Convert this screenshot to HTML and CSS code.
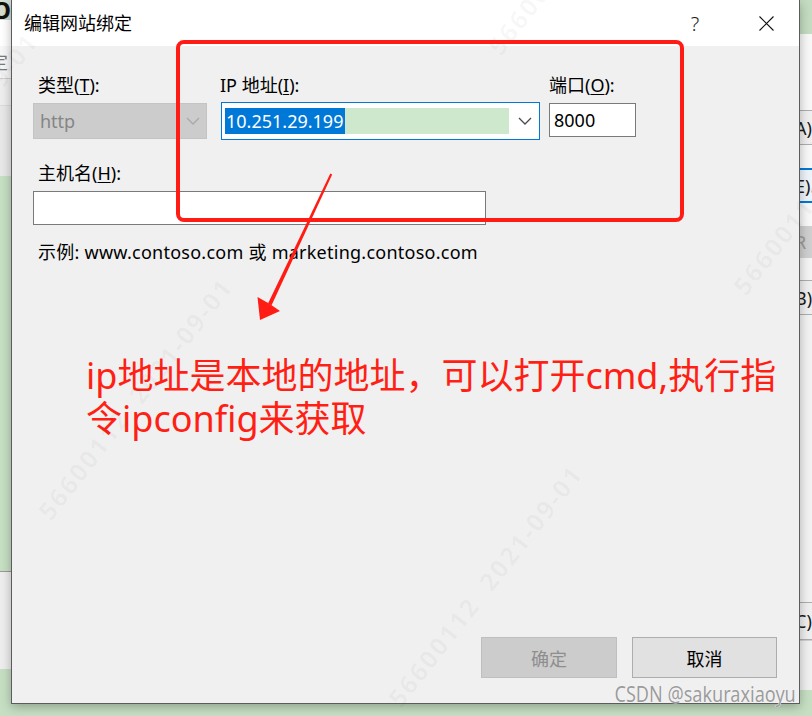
FILE: index.html
```html
<!DOCTYPE html>
<html lang="zh-CN">
<head>
<meta charset="utf-8">
<title>编辑网站绑定</title>
<link rel="stylesheet" href="styles.css">
</head>
<body>
<div class="screen">
  <div class="strip strip-left">
    <div class="band lb1"><span class="frag frag-o">O</span></div>
    <div class="band lb2"></div>
    <div class="band lb3"><span class="frag frag-ding">定</span></div>
    <div class="band lb4"></div>
    <div class="band lb5"></div>
    <div class="band lb6"></div>
    <div class="band lb7"></div>
    <div class="band lb8"></div>
  </div>

  <div class="dialog">
    <div class="titlebar">
      <span class="title">编辑网站绑定</span>
      <span class="tb-btn tb-help">?</span>
      <span class="tb-btn tb-close">
        <svg width="15" height="15" viewBox="0 0 15 15"><path d="M0.5 0.5 L14.5 14.5 M14.5 0.5 L0.5 14.5" stroke="#111" stroke-width="1.1" fill="none"/></svg>
      </span>
    </div>

    <div class="body">
      <div class="row1">
        <div class="col col-type">
          <div class="lbl lbl-indent">类型(<u>T</u>):</div>
          <div class="combo combo-disabled">
            <span class="combo-text">http</span>
            <svg class="chev" width="14" height="8" viewBox="0 0 14 8"><polyline points="1,1 7,7 13,1" fill="none" stroke="#a9a9a9" stroke-width="1.3"/></svg>
          </div>
        </div>
        <div class="col col-ip">
          <div class="lbl lbl-ip">IP 地址(<u>I</u>):</div>
          <div class="combo combo-ip">
            <div class="ip-edit"><span class="ip-sel">10.251.29.199</span></div>
            <svg class="chev" width="14" height="8" viewBox="0 0 14 8"><polyline points="1,1 7,7 13,1" fill="none" stroke="#4a4a4a" stroke-width="1.3"/></svg>
          </div>
        </div>
        <div class="col col-port">
          <div class="lbl">端口(<u>O</u>):</div>
          <div class="textbox port">8000</div>
        </div>
      </div>

      <div class="lbl lbl-indent row2-lbl">主机名(<u>H</u>):</div>
      <div class="textbox host"></div>
      <div class="example">示例: www.contoso.com 或 marketing.contoso.com</div>

      <div class="note">
        <span class="note-line">ip地址是本地的地址，可以打开cmd,执行指</span>
        <span class="note-line">令ipconfig来获取</span>
      </div>

      <div class="buttons">
        <div class="btn btn-disabled">确定</div>
        <div class="btn btn-cancel">取消</div>
      </div>
    </div>
  </div>

  <div class="strip strip-right">
    <div class="band rb1"></div>
    <div class="band rb2"></div>
    <div class="band rb3 rbox"><span class="frag frag-r">A).</span></div>
    <div class="band rb4"></div>
    <div class="band rb5 rbox rbox-focus"><span class="frag frag-r">E).</span></div>
    <div class="band rb6"></div>
    <div class="band rb7"><span class="frag frag-r frag-dis">R</span></div>
    <div class="band rb8"></div>
    <div class="band rb9 rbox"><span class="frag frag-r">B)</span></div>
    <div class="band rb10"></div>
    <div class="band rb11 rbox"><span class="frag frag-r">C)</span></div>
    <div class="band rb12"></div>
    <div class="band rb13"></div>
  </div>

  <div class="overlay">
    <span class="wm wm1">56600112&nbsp;&nbsp;2021-09-01</span>
    <span class="wm wm2">56600112&nbsp;&nbsp;2021-09-01</span>
    <span class="wm wm3">56600112&nbsp;&nbsp;2021-09-01</span>
    <span class="wm wm4">56600112&nbsp;&nbsp;2021-09-01</span>
    <span class="wm wm5">56600112&nbsp;&nbsp;2021-09-01</span>
    <svg class="marks" width="812" height="716" viewBox="0 0 812 716">
      <rect x="178" y="42" width="504" height="178" rx="6" ry="6" fill="none" stroke="#ff1c14" stroke-width="4"/>
      <polygon points="330.3,173.6 332.2,174.4 271.6,305.2 268.0,303.6" fill="#ff1c14"/>
      <polygon points="260,320 257.5,297 269,303.5 280,311" fill="#ff1c14"/>
    </svg>
    <span class="csdn">CSDN @sakuraxiaoyu</span>
  </div>
</div>
</body>
</html>
```

FILE: styles.css
```css
* { box-sizing: border-box; }

html, body {
  margin: 0;
  padding: 0;
}

body {
  width: 812px;
  height: 716px;
  overflow: hidden;
  background: #c6dfc3;
  font-family: "Noto Sans", "Noto Sans CJK SC", sans-serif;
  color: #000;
}

.screen {
  position: relative;
  width: 812px;
  height: 716px;
  display: grid;
  grid-template-columns: 11px 789px 12px;
  align-items: start;
}

/* ---------- background window fragments ---------- */
.strip {
  display: flex;
  flex-direction: column;
  height: 716px;
  overflow: hidden;
}

.band {
  flex: none;
  position: relative;
  overflow: hidden;
  display: flex;
  align-items: center;
}

.frag {
  white-space: nowrap;
  font-size: 18px;
  line-height: 20px;
}

.frag-o {
  font-size: 24px;
  font-weight: 700;
  margin-left: -8px;
  color: #111;
}

.frag-ding {
  margin-left: -10px;
  color: #7a7a7a;
}

.lb1 { height: 20px; background: #d3ddd0; }
.lb2 { height: 26px; background: #ffffff; }
.lb3 { height: 32px; background: #f7f7f7; }
.lb4 { height: 27px; background: #eeeeee; border-top: 1px solid #d2d2d2; }
.lb5 { height: 71px; background: #e8e8e8; border-top: 1px solid #dcdcdc; }
.lb6 { height: 395px; background: #c6e0c3; }
.lb7 { height: 98px; background: #eeeeee; border-top: 1px solid #9a9a9a; }
.lb8 { height: 47px; background: #c6dfc3; }

.rb1 { height: 34px; background: #c4dcc1; }
.rb2 { height: 76px; background: #f8f8f8; }
.rb3 { height: 35px; }
.rb4 { height: 23px; background: #f8f8f8; }
.rb5 { height: 35px; }
.rb6 { height: 23px; background: #f8f8f8; }
.rb7 { height: 32px; background: #cfcfcf; }
.rb8 { height: 22px; background: #f4f4f4; }
.rb9 { height: 35px; }
.rb10 { height: 287px; background: #f2f2f2; }
.rb11 { height: 38px; }
.rb12 { height: 50px; background: #f0f0f0; border-top: 1px solid #cfcfcf; }
.rb13 { height: 26px; background: #c6dfc3; }

.rbox {
  background: #efefef;
  border-top: 1px solid #adadad;
  border-bottom: 1px solid #adadad;
}

.rbox-focus {
  border-top: 2px solid #0078d7;
  border-bottom: 2px solid #0078d7;
  background: #eef4fa;
}

.frag-r {
  margin-left: -5px;
  color: #1a1a1a;
}

.frag-dis { color: #9a9a9a; }

/* ---------- dialog ---------- */
.dialog {
  position: relative;
  z-index: 1;
  height: 704px;
  display: flex;
  flex-direction: column;
  border: 1px solid #5c5c5c;
  border-top: none;
  box-shadow: 0 3px 10px rgba(0, 0, 0, 0.28);
}

.titlebar {
  flex: none;
  height: 46px;
  background: #ffffff;
  display: flex;
  align-items: center;
  padding-left: 12px;
}

.title {
  font-size: 18px;
  line-height: 20px;
  color: #000;
}

.tb-btn {
  width: 46px;
  height: 46px;
  display: flex;
  align-items: center;
  justify-content: center;
}

.tb-help {
  margin-left: auto;
  font-size: 20px;
  font-weight: 300;
  color: #1a1a1a;
}

.tb-close {
  margin-left: 25px;
  margin-right: 10px;
}

.body {
  flex: 1;
  background: #f0f0f0;
  display: flex;
  flex-direction: column;
  padding: 29px 22px 25px 21px;
}

.row1 {
  display: flex;
  align-items: flex-start;
}

.col { display: flex; flex-direction: column; }

.col-type { width: 174px; }
.col-ip { width: 319px; margin-left: 14px; }
.col-port { width: 87px; margin-left: 9px; }

.lbl {
  font-size: 18px;
  line-height: 20px;
  height: 20px;
  white-space: nowrap;
  margin-bottom: 8px;
}

.lbl u { text-underline-offset: 2px; }

.lbl-indent { padding-left: 5px; }

.lbl-ip { margin-left: -1px; margin-bottom: 7px; }

.combo {
  display: flex;
  align-items: center;
  font-size: 18px;
}

.combo-disabled {
  height: 36px;
  background: #cccccc;
  border: 1px solid #c4c4c4;
  padding-left: 6px;
  padding-right: 6px;
}

.combo-text {
  color: #858585;
  flex: 1;
}

.combo-ip {
  height: 38px;
  background: #ffffff;
  border: 1px solid #0078d7;
  padding: 4px 7px 4px 3px;
}

.ip-edit {
  width: 284px;
  height: 26px;
  background: #cde8cc;
  display: flex;
  align-items: center;
}

.ip-sel {
  height: 26px;
  display: flex;
  align-items: center;
  background: #0078d7;
  color: #ffffff;
  padding: 0 2px 0 1px;
  font-size: 18px;
}

.combo-ip .chev { margin-left: auto; }

.textbox {
  background: #ffffff;
  border: 1px solid #7a7a7a;
  font-size: 18px;
  display: flex;
  align-items: center;
  padding-left: 4px;
}

.port { height: 34px; }

.row2-lbl { margin-top: 23px; }

.host { width: 453px; height: 34px; }

.example {
  margin-top: 17px;
  padding-left: 5px;
  font-size: 18px;
  line-height: 20px;
  letter-spacing: 0.25px;
  white-space: nowrap;
}

.note {
  margin-top: 92px;
  margin-left: 53px;
  color: #ff1f14;
  font-size: 36px;
  line-height: 43px;
}

.note-line {
  display: block;
  height: 43px;
  white-space: nowrap;
}

.buttons {
  margin-top: auto;
  display: flex;
  justify-content: flex-end;
  gap: 15px;
}

.btn {
  height: 41px;
  font-size: 18px;
  display: flex;
  align-items: center;
  justify-content: center;
  border: 1px solid #adadad;
}

.btn-disabled {
  width: 136px;
  background: #cccccc;
  border-color: #bfbfbf;
  color: #8e8e8e;
}

.btn-cancel {
  width: 145px;
  background: #e1e1e1;
  color: #000;
}

/* ---------- overlay: annotations & watermarks ---------- */
.overlay {
  position: absolute;
  inset: 0;
  z-index: 5;
  pointer-events: none;
  overflow: hidden;
}

.marks {
  position: absolute;
  left: 0;
  top: 0;
}

.wm {
  position: absolute;
  white-space: nowrap;
  font-family: "Noto Sans", sans-serif;
  font-size: 25px;
  line-height: 30px;
  font-weight: 700;
  letter-spacing: 2px;
  color: rgba(0, 0, 0, 0.035);
  transform-origin: 0 100%;
  transform: rotate(-52deg);
}

.wm1 { left: 55px; top: 495px; }
.wm2 { left: 405px; top: 682px; }
.wm3 { left: 505px; top: 30px; }
.wm4 { left: 750px; top: 270px; }
.wm5 { left: -140px; top: 250px; }

.csdn {
  position: absolute;
  right: 16px;
  top: 681px;
  font-family: "Noto Sans", sans-serif;
  font-size: 21px;
  line-height: 26px;
  color: #9c9c9c;
  text-shadow: 0 0 1px #ffffff, 0 0 1px #ffffff;
  transform-origin: 100% 50%;
  transform: scaleX(0.86);
  white-space: nowrap;
}
```
